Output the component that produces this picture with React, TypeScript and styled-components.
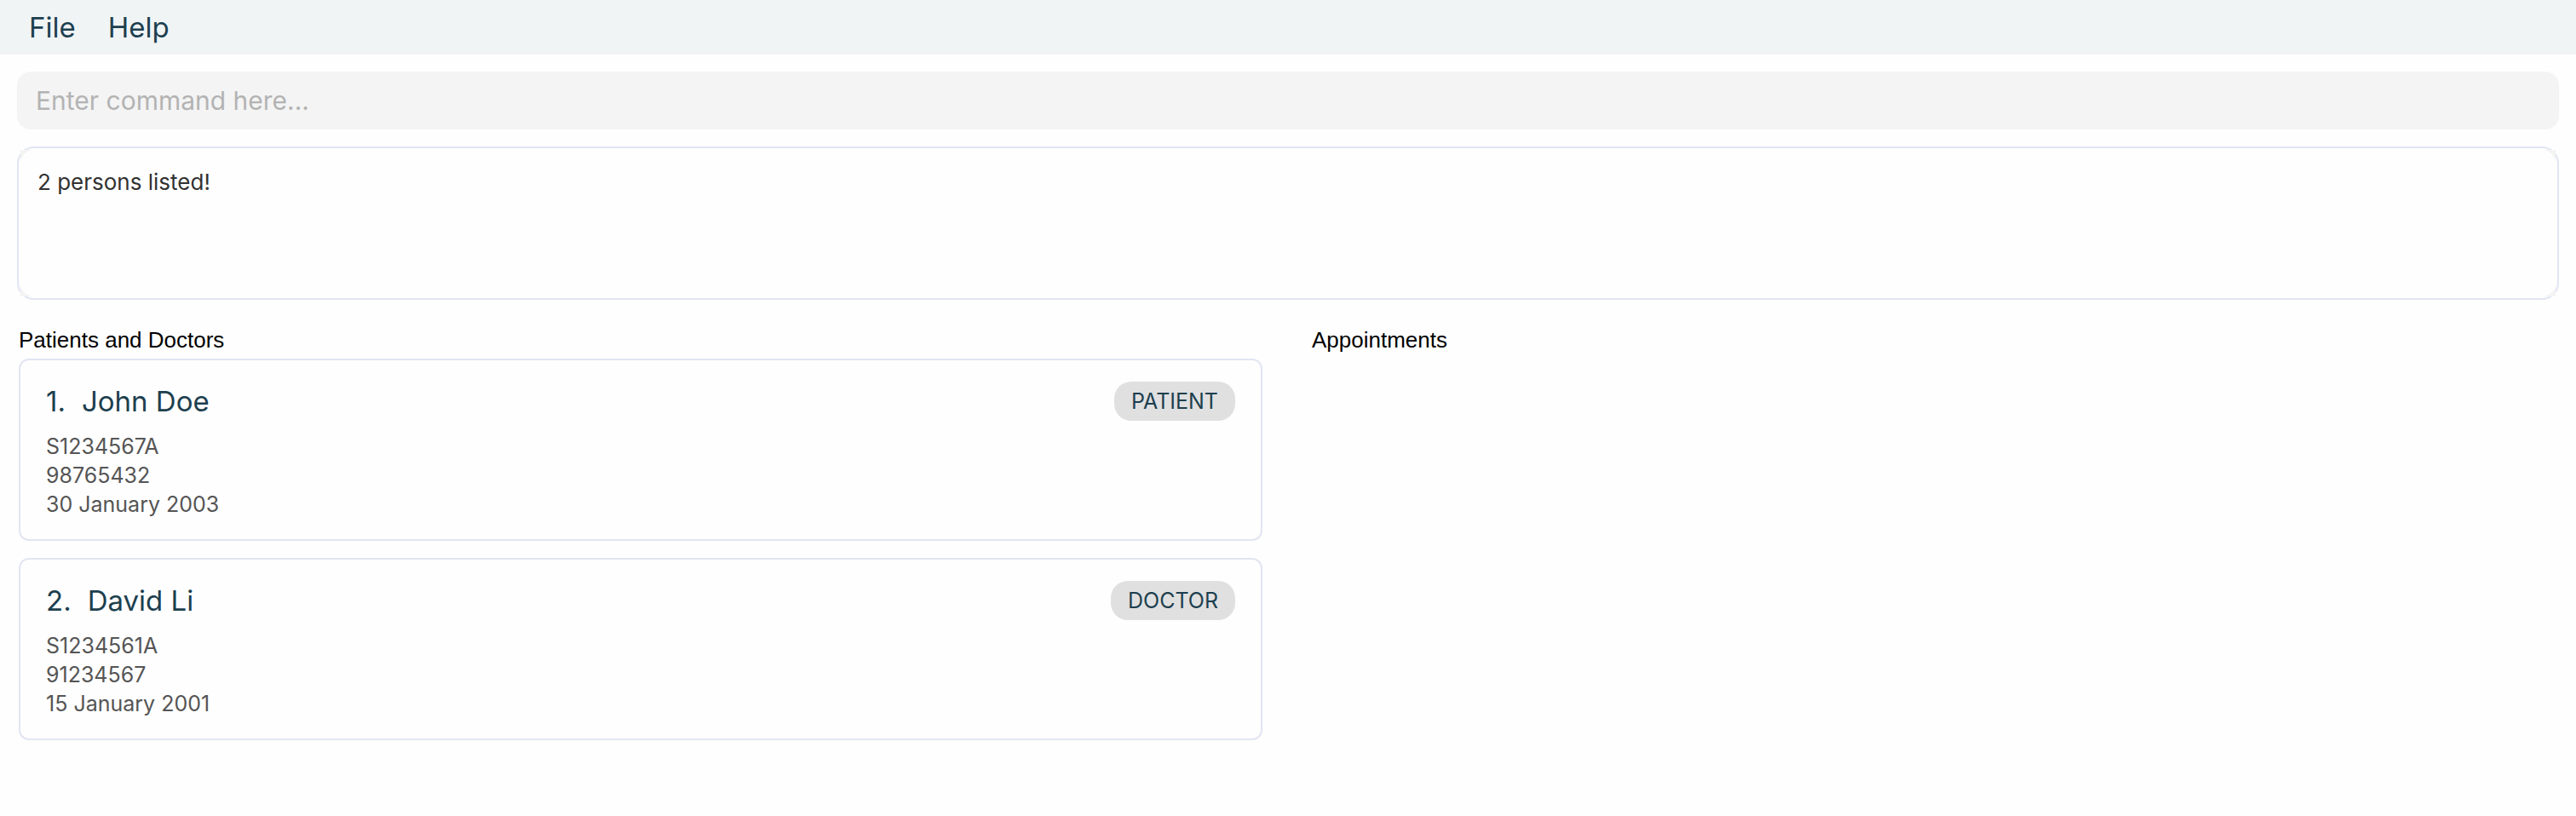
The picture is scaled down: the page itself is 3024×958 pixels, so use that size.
import React from 'react';
import styled, { createGlobalStyle } from 'styled-components';

const GlobalStyle = createGlobalStyle`
  * { box-sizing: border-box; }
  body {
    margin: 0;
    background: #fefefe;
    font-family: Inter, 'Liberation Sans', sans-serif;
  }
`;

const MenuBar = styled.nav`
  display: flex;
  gap: 38px;
  padding: 0 34px;
  height: 64px;
  background: #f0f4f5;
`;

const MenuButton = styled.button`
  padding: 0;
  border: 0;
  background: none;
  color: #1d3f4f;
  font: 400 33px/64px Inter, sans-serif;
`;

const Console = styled.section`
  display: flex;
  flex-direction: column;
  gap: 20px;
  padding: 20px;
`;

const CommandInput = styled.input`
  width: 100%;
  height: 68px;
  padding: 0 22px;
  border: 0;
  border-radius: 16px;
  outline: 0;
  background: #f4f4f4;
  color: #1d3f4f;
  font: 400 30px/40px Inter, sans-serif;
  &::placeholder { color: #b3b3b3; opacity: 1; }
`;

const ResultFrame = styled.div`
  padding: 2px;
  border: 2px solid #e2e5f3;
  border-radius: 20px;
`;

const ResultBacking = styled.div`
  background: #f4f4f4;
`;

const ResultText = styled.output`
  display: block;
  min-height: 172px;
  padding: 20px;
  border-radius: 16px;
  background: #fefefe;
  color: #323232;
  font-size: 26px;
  line-height: 36px;
`;

const Panes = styled.main`
  display: grid;
  grid-template-columns: 1fr 1fr;
`;

const Pane = styled.section<{ $side: 'left' | 'right' }>`
  padding: ${(p) => (p.$side === 'left' ? '12px 30px 20px 22px' : '12px 22px 20px 28px')};
`;

const PaneTitle = styled.h2`
  margin: 0;
  color: #000;
  font: 400 26px/30px 'Liberation Sans', Arial, sans-serif;
`;

const PersonList = styled.ul`
  display: flex;
  flex-direction: column;
  gap: 20px;
  margin: 7px 0 0;
  padding: 0;
  list-style: none;
`;

const Card = styled.li`
  padding: 25px 30px 24px;
  border: 2px solid #e2e5f3;
  border-radius: 12px;
`;

const CardHeader = styled.header`
  display: flex;
  justify-content: space-between;
  align-items: center;
  margin-bottom: 13px;
`;

const Name = styled.h3`
  display: flex;
  gap: 19px;
  margin: 0;
  color: #1d3f4f;
  font-size: 33px;
  font-weight: 400;
  line-height: 46px;
`;

const Badge = styled.span`
  padding: 0 20px;
  border-radius: 20px;
  background: #e0e0e0;
  color: #1d3f4f;
  font-size: 25px;
  line-height: 46px;
`;

const Detail = styled.p`
  margin: 0;
  color: #555;
  font-size: 25px;
  line-height: 34px;
`;

type Person = { name: string; role: string; details: string[] };

const people: Person[] = [
  { name: 'John Doe', role: 'PATIENT', details: ['S1234567A', '98765432', '30 January 2003'] },
  { name: 'David Li', role: 'DOCTOR', details: ['S1234561A', '91234567', '15 January 2001'] },
];

export default function App() {
  return (
    <>
      <GlobalStyle />
      <MenuBar>
        <MenuButton type="button">File</MenuButton>
        <MenuButton type="button">Help</MenuButton>
      </MenuBar>
      <Console>
        <CommandInput type="text" aria-label="Command" placeholder="Enter command here..." />
        <ResultFrame>
          <ResultBacking>
            <ResultText>2 persons listed!</ResultText>
          </ResultBacking>
        </ResultFrame>
      </Console>
      <Panes>
        <Pane $side="left">
          <PaneTitle>Patients and Doctors</PaneTitle>
          <PersonList>
            {people.map((person, i) => (
              <Card key={person.name}>
                <CardHeader>
                  <Name>
                    <span>{i + 1}.</span>
                    <span>{person.name}</span>
                  </Name>
                  <Badge>{person.role}</Badge>
                </CardHeader>
                {person.details.map((detail) => (
                  <Detail key={detail}>{detail}</Detail>
                ))}
              </Card>
            ))}
          </PersonList>
        </Pane>
        <Pane $side="right">
          <PaneTitle>Appointments</PaneTitle>
        </Pane>
      </Panes>
    </>
  );
}
